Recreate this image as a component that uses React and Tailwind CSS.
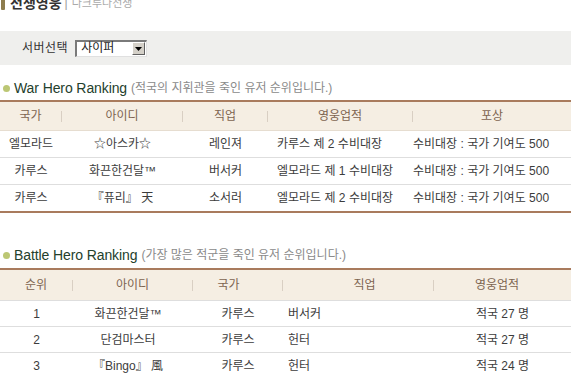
const font = {
  fontFamily: '"Liberation Sans", "Noto Sans CJK KR", sans-serif',
};

const warCols = [
  { label: "국가", w: "w-[62px]" },
  { label: "아이디", w: "w-[121px]" },
  { label: "직업", w: "w-[85px]" },
  { label: "영웅업적", w: "w-[145px]" },
  { label: "포상", w: "w-[158px]", last: true },
];

const warRows = [
  ["엘모라드", "☆아스카☆", "레인져", "카루스 제 2 수비대장", "수비대장 : 국가 기여도 500"],
  ["카루스", "화끈한건달™", "버서커", "엘모라드 제 1 수비대장", "수비대장 : 국가 기여도 500"],
  ["카루스", "『퓨리』 天", "소서러", "엘모라드 제 2 수비대장", "수비대장 : 국가 기여도 500"],
];

const battleCols = [
  { label: "순위", w: "w-[73px]", pad: "" },
  { label: "아이디", w: "w-[120px]", pad: "" },
  { label: "국가", w: "w-[90px]", pad: "pr-[18px]" },
  { label: "직업", w: "w-[151px]", pad: "pl-[13px]" },
  { label: "영웅업적", w: "w-[137px]", pad: "pr-[11px]", last: true },
];

const battleRows = [
  ["1", "화끈한건달™", "카루스", "버서커", "적국 27 명"],
  ["2", "단검마스터", "카루스", "헌터", "적국 27 명"],
  ["3", "『Bingo』 風", "카루스", "헌터", "적국 24 명"],
];

const HeaderCell = ({ col }) => (
  <div className={`${col.w} flex items-center`}>
    <span className={`flex-1 text-center ${col.pad || ""}`}>{col.label}</span>
    {!col.last && <div className="w-px h-[11px] bg-[#d9cfc3]" />}
  </div>
);

const SectionTitle = ({ title, desc }) => (
  <div className="flex items-center h-[16px] pl-[3px]">
    <span className="w-[7px] h-[7px] rounded-full bg-[#bcc774] mr-[4px]" />
    <span className="text-[14px] text-[#24402c] tracking-[-0.1px]">{title}</span>
    <span className="ml-[4px] text-[12px] text-[#8a8a8a]">{desc}</span>
  </div>
);

export default function App() {
  return (
    <div
      className="w-[571px] h-[384px] overflow-hidden bg-white text-[12px] text-[#3c3c3c]"
      style={font}
    >
      {/* page title, top part cut off */}
      <div className="flex items-end h-[10px] pl-[1px]">
        <div className="w-[4px] h-[10px] bg-[#8d7c4e] rounded-b-[1px]" />
        <div className="flex items-center -mb-[1px] ml-[5px] leading-[16px]">
          <span className="text-[14px] font-bold text-[#333]">전쟁영웅</span>
          <span className="ml-[3px] text-[12px] text-[#999]">|</span>
          <span className="ml-[4px] text-[11px] text-[#aaa]">다크루나전쟁</span>
        </div>
      </div>

      {/* server select */}
      <div className="mt-[21px] h-[34px] bg-[#efefed] flex items-center pl-[22px]">
        <span className="text-[#333] tracking-[0.5px]">서버선택</span>
        <div className="ml-[7px] w-[72px] h-[17px] flex items-center bg-white border-t-2 border-l-2 border-t-[#7a7a7a] border-l-[#7a7a7a] border-b border-r border-b-[#e0e0e0] border-r-[#e0e0e0]">
          <span className="flex-1 pl-[4px] leading-[13px] text-[#222]">사이퍼</span>
          <div className="w-[13px] h-[13px] mr-[1px] bg-[#d4d0c8] border border-t-white border-l-white border-b-[#606060] border-r-[#606060] flex items-center justify-center">
            <svg width="7" height="4" viewBox="0 0 7 4">
              <path d="M0 0h7L3.5 4z" fill="#000" />
            </svg>
          </div>
        </div>
      </div>

      {/* war hero ranking */}
      <div className="mt-[15px]">
        <SectionTitle title="War Hero Ranking" desc="(적국의 지휘관을 죽인 유저 순위입니다.)" />
      </div>
      <div className="mt-[4px] border-t-2 border-b-2 border-[#a97b5d]">
        <div className="flex h-[29px] bg-[#f5eee3] text-[#7d6450] border-b border-[#e6ddd0]">
          {warCols.map((c) => (
            <HeaderCell key={c.label} col={c} />
          ))}
        </div>
        {warRows.map((r, i) => (
          <div
            key={i}
            className={`flex items-center ${i < 2 ? "h-[27px] border-b border-[#dedede]" : "h-[26px]"}`}
          >
            <div className="w-[62px] text-center">{r[0]}</div>
            <div className="w-[121px] text-center">{r[1]}</div>
            <div className="w-[85px] text-center">{r[2]}</div>
            <div className="w-[145px] pl-[9px] whitespace-nowrap">{r[3]}</div>
            <div className="w-[158px] whitespace-nowrap">{r[4]}</div>
          </div>
        ))}
      </div>

      {/* battle hero ranking */}
      <div className="mt-[34px]">
        <SectionTitle title="Battle Hero Ranking" desc="(가장 많은 적군을 죽인 유저 순위입니다.)" />
      </div>
      <div className="mt-[5px] border-t-2 border-[#a97b5d]">
        <div className="flex h-[30px] bg-[#f5eee3] text-[#7d6450]">
          {battleCols.map((c) => (
            <HeaderCell key={c.label} col={c} />
          ))}
        </div>
        {battleRows.map((r, i) => (
          <div key={i} className="flex items-center h-[26px] border-t border-[#dedede]">
            <div className="w-[73px] text-center">{r[0]}</div>
            <div className="w-[120px] text-center pr-[10px]">{r[1]}</div>
            <div className="w-[90px] text-center">{r[2]}</div>
            <div className="w-[151px] pl-[5px]">{r[3]}</div>
            <div className="w-[137px] text-center">{r[4]}</div>
          </div>
        ))}
      </div>
    </div>
  );
}
